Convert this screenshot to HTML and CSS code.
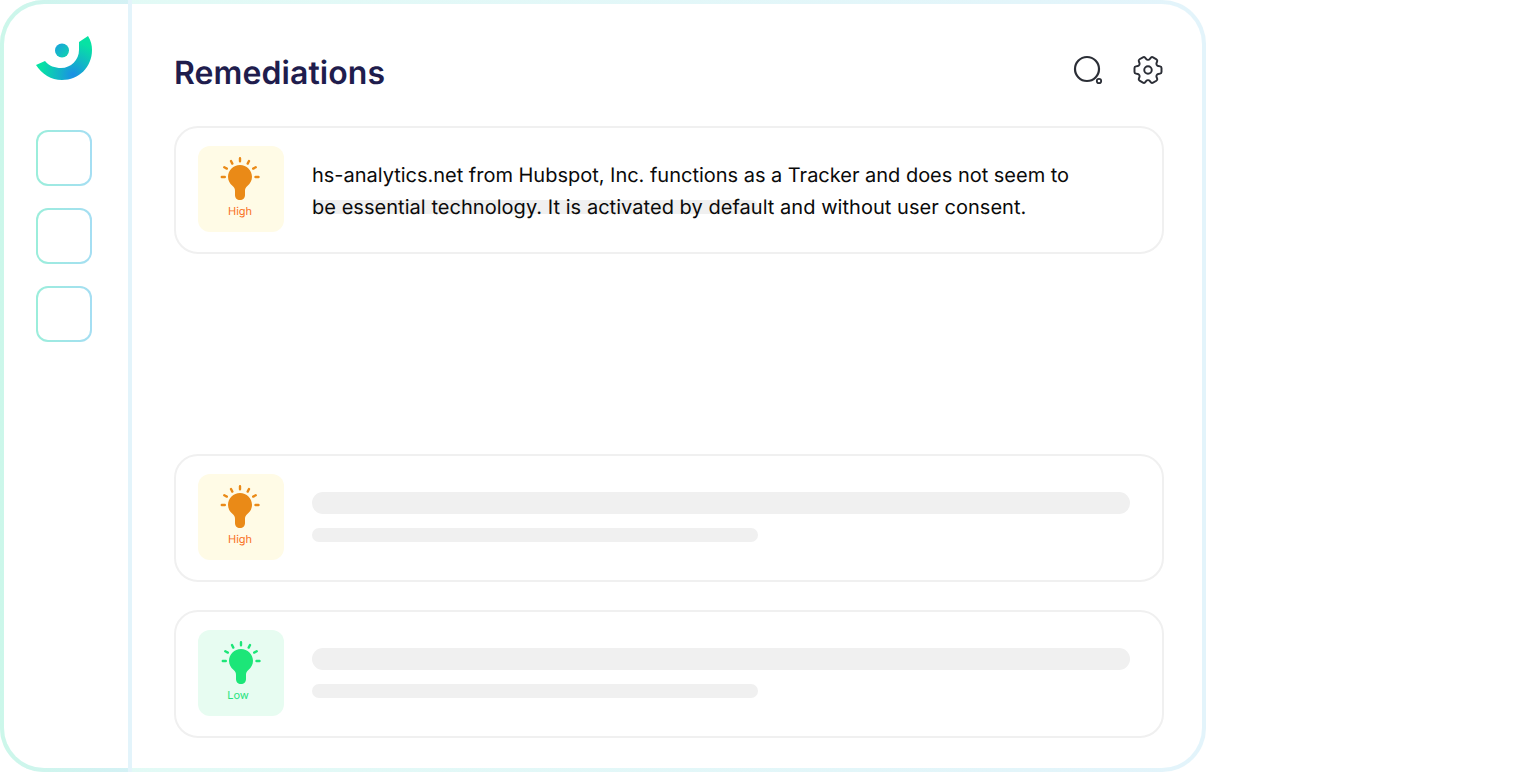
FILE: index.html
```html
<!DOCTYPE html>
<html lang="en">
<head>
<meta charset="utf-8">
<title>Remediations</title>
<link rel="stylesheet" href="styles.css">
</head>
<body>
<svg class="defs" width="0" height="0" aria-hidden="true">
  <defs>
    <symbol id="bulb" viewBox="0 0 40 44">
      <path class="bulb-body" d="M20 8C13.400 8 8 13.200 8 19.800 8 23.600 9.800 26.600 12.400 28.800 14.400 30.500 15 32 15 34V38C15 41 17 43 20 43S25 41 25 38V34C25 32 25.600 30.500 27.600 28.800 30.200 26.600 32 23.600 32 19.800 32 13.200 26.600 8 20 8Z"/>
      <path class="bulb-rays" d="M20 1.300V4.300M11 4 12.300 6.600M29 4 27.700 6.600M4.300 10.300 6.800 11.600M35.700 10.300 33.200 11.600M1.800 20H4.800M35.500 20H38.500"/>
    </symbol>
  </defs>
</svg>
<div class="frame">
  <aside class="sidebar">
    <svg class="logo" width="56" height="44" viewBox="36 36 56 44" aria-hidden="true">
      <defs>
        <radialGradient id="arcFill" gradientUnits="userSpaceOnUse" cx="73" cy="75" r="33">
          <stop offset="0" stop-color="#1a8ee6"/>
          <stop offset="0.45" stop-color="#12b6c6"/>
          <stop offset="1" stop-color="#07e2a4"/>
        </radialGradient>
        <linearGradient id="dotFill" x1="0" y1="0" x2="1" y2="1">
          <stop offset="0" stop-color="#1a9fe0"/>
          <stop offset="1" stop-color="#0fd6ac"/>
        </linearGradient>
      </defs>
      <path fill="url(#arcFill)" d="M88 36C91 41 92 45 92 50 92 67 79 80 62 80 51 80 42 74 36 65L45 61C49 66 55 68 61 68 71 68 79 60 79 50 79 47 79 45 79 42z"/>
      <circle cx="62" cy="50.500" r="7" fill="url(#dotFill)"/>
    </svg>
    <nav class="nav">
      <div class="nav-item"></div>
      <div class="nav-item"></div>
      <div class="nav-item"></div>
    </nav>
  </aside>
  <main class="main">
    <header class="header">
      <h1 class="title">Remediations</h1>
      <div class="tools">
        <svg class="icon-search" width="32" height="32" viewBox="0 0 32 32" aria-hidden="true">
          <circle class="line" cx="15" cy="15" r="12"/>
          <circle class="line thin" cx="27" cy="27" r="2.200"/>
        </svg>
        <svg class="icon-gear" width="36" height="36" viewBox="0 0 24 24" aria-hidden="true">
          <g transform="rotate(90 12 12)">
            <path class="line gear" d="M9.594 3.940c.09-.542.56-.94 1.110-.94h2.593c.55 0 1.020.398 1.110.94l.213 1.281c.063.374.313.686.645.870.074.040.147.083.220.127.324.196.720.257 1.075.124l1.217-.456a1.125 1.125 0 011.370.490l1.296 2.247a1.125 1.125 0 01-.260 1.431l-1.003.827c-.293.240-.438.613-.431.992a6.759 6.759 0 010 .255c-.007.378.138.750.430.990l1.005.828c.424.350.534.954.260 1.430l-1.298 2.247a1.125 1.125 0 01-1.369.491l-1.217-.456c-.355-.133-.750-.072-1.076.124a6.570 6.570 0 01-.220.128c-.331.183-.581.495-.644.869l-.213 1.280c-.09.543-.56.941-1.110.941h-2.594c-.55 0-1.020-.398-1.110-.940l-.213-1.281c-.062-.374-.312-.686-.644-.870a6.520 6.520 0 01-.220-.127c-.325-.196-.720-.257-1.076-.124l-1.217.456a1.125 1.125 0 01-1.369-.490l-1.297-2.247a1.125 1.125 0 01.260-1.431l1.004-.827c.292-.240.437-.613.430-.992a6.932 6.932 0 010-.255c.007-.378-.138-.750-.430-.990l-1.004-.828a1.125 1.125 0 01-.260-1.430l1.297-2.247a1.125 1.125 0 011.370-.491l1.216.456c.356.133.751.072 1.076-.124.072-.044.146-.087.220-.128.332-.183.582-.495.644-.869l.214-1.281z"/>
            <circle class="line gear" cx="12" cy="12" r="2.500"/>
          </g>
        </svg>
      </div>
    </header>
    <section class="cards">
      <article class="card">
        <div class="badge badge-high">
          <svg class="bulb" width="40" height="44"><use href="#bulb"/></svg>
          <span class="badge-label">High</span>
        </div>
        <div class="copy">
          <span class="copy-bar"></span>
          <p class="copy-text"><span class="line-one">hs-analytics.net from Hubspot, Inc. functions as a Tracker and does not seem to</span> <span class="line-two">be essential technology. It is activated by default and without user consent.</span></p>
        </div>
      </article>
      <article class="card card-spaced">
        <div class="badge badge-high">
          <svg class="bulb" width="40" height="44"><use href="#bulb"/></svg>
          <span class="badge-label">High</span>
        </div>
        <div class="skeleton">
          <div class="bar bar-long"></div>
          <div class="bar bar-short"></div>
        </div>
      </article>
      <article class="card">
        <div class="badge badge-low">
          <svg class="bulb" width="40" height="44"><use href="#bulb"/></svg>
          <span class="badge-label">Low</span>
        </div>
        <div class="skeleton">
          <div class="bar bar-long"></div>
          <div class="bar bar-short"></div>
        </div>
      </article>
    </section>
  </main>
</div>
</body>
</html>
```
FILE: styles.css
```css
* { box-sizing: border-box; }

html, body {
  margin: 0;
  height: 100%;
  background: #fff;
  overflow: hidden;
}

body {
  font-family: "Inter", "Liberation Sans", sans-serif;
  color: #0a0a0a;
  text-rendering: geometricPrecision;
}

.defs { position: absolute; }

.frame {
  display: flex;
  width: 1206px;
  height: 772px;
  border: 4px solid transparent;
  border-radius: 44px;
  background:
    linear-gradient(#fff, #fff) padding-box,
    linear-gradient(90deg, #e2fbf5 0%, #e3f4fb 100%) border-box;
}

.sidebar {
  flex: none;
  display: flex;
  flex-direction: column;
  align-items: flex-start;
  gap: 50px;
  width: 132px;
  margin: -4px 0 -4px -4px;
  padding: 32px 0 0 32px;
  border: 4px solid transparent;
  border-radius: 44px 0 0 44px;
  background:
    linear-gradient(#fff, #fff) padding-box,
    linear-gradient(90deg, #ccf7ea 0%, #d4f1f5 100%) border-box;
  position: relative;
}

.sidebar::after {
  content: "";
  position: absolute;
  top: -4px;
  bottom: -4px;
  right: -4px;
  width: 4px;
  background: #e3f4fb;
}

.logo { display: block; flex: none; }

.nav {
  display: flex;
  flex-direction: column;
  gap: 22px;
}

.nav-item {
  width: 56px;
  height: 56px;
  border: 2px solid transparent;
  border-radius: 12px;
  background:
    linear-gradient(#fff, #fff) padding-box,
    linear-gradient(90deg, #9beedb 0%, #a5def3 100%) border-box;
}

.main {
  flex: 1;
  min-width: 0;
  padding: 0 38px 0 42px;
  display: flex;
  flex-direction: column;
}

.header {
  flex: none;
  height: 122px;
  display: flex;
  align-items: center;
  justify-content: space-between;
  padding-top: 16px;
}

.title {
  margin: 0;
  font-size: 32px;
  line-height: 40px;
  font-weight: 600;
  letter-spacing: 0.08px;
  color: #1f1d4d;
}

.tools {
  display: flex;
  align-items: center;
  gap: 26px;
  margin: -6px -2px 0 0;
}

.icon-search, .icon-gear { display: block; }

.line {
  fill: none;
  stroke: #2b2e36;
  stroke-width: 2.200;
}

.thin { stroke-width: 1.800; }

.gear {
  stroke-width: 1.300;
  stroke-linejoin: round;
}

.cards {
  display: flex;
  flex-direction: column;
  gap: 28px;
}

.card {
  display: flex;
  align-items: flex-start;
  gap: 28px;
  height: 128px;
  padding: 18px 32px 0 22px;
  background: #fff;
  border: 2px solid #f0f0f0;
  border-radius: 24px;
}

.card-spaced { margin-top: 172px; }

.badge {
  flex: none;
  width: 86px;
  height: 86px;
  border-radius: 12px;
  display: flex;
  flex-direction: column;
  align-items: center;
  padding-top: 11px;
}

.badge-high { background: #fffbe6; --bulb: #ea8a17; --label: #f9701f; }
.badge-low { background: #e7fcf1; --bulb: #1ce678; --label: #26e37d; }

.bulb { display: block; flex: none; }
.badge-high .bulb { margin-right: 2px; }
.bulb-body { fill: var(--bulb); }
.bulb-rays {
  fill: none;
  stroke: var(--bulb);
  stroke-width: 2.400;
  stroke-linecap: round;
}

.badge-label {
  font-size: 11px;
  line-height: 14px;
  margin-top: 3px;
  color: var(--label);
}

.badge-high .badge-label { margin-right: 2px; }
.badge-low .badge-label { margin-right: 6px; }

.copy {
  position: relative;
  flex: 1;
  min-width: 0;
  margin-top: 13px;
}

.copy-bar {
  position: absolute;
  left: 0;
  top: 41px;
  width: 446px;
  height: 14px;
  border-radius: 7px;
  background: #f0f0f0;
}

.copy-text {
  position: relative;
  margin: 0;
  max-width: 780px;
  font-size: 20px;
  line-height: 32px;
}

.line-one { letter-spacing: -0.015px; }
.line-two { letter-spacing: 0.04px; }

.skeleton {
  flex: 1;
  min-width: 0;
  margin-top: 18px;
  display: flex;
  flex-direction: column;
  gap: 14px;
}

.bar { background: #f0f0f0; }
.bar-long { height: 22px; border-radius: 11px; }
.bar-short { width: 446px; height: 14px; border-radius: 7px; }
```
